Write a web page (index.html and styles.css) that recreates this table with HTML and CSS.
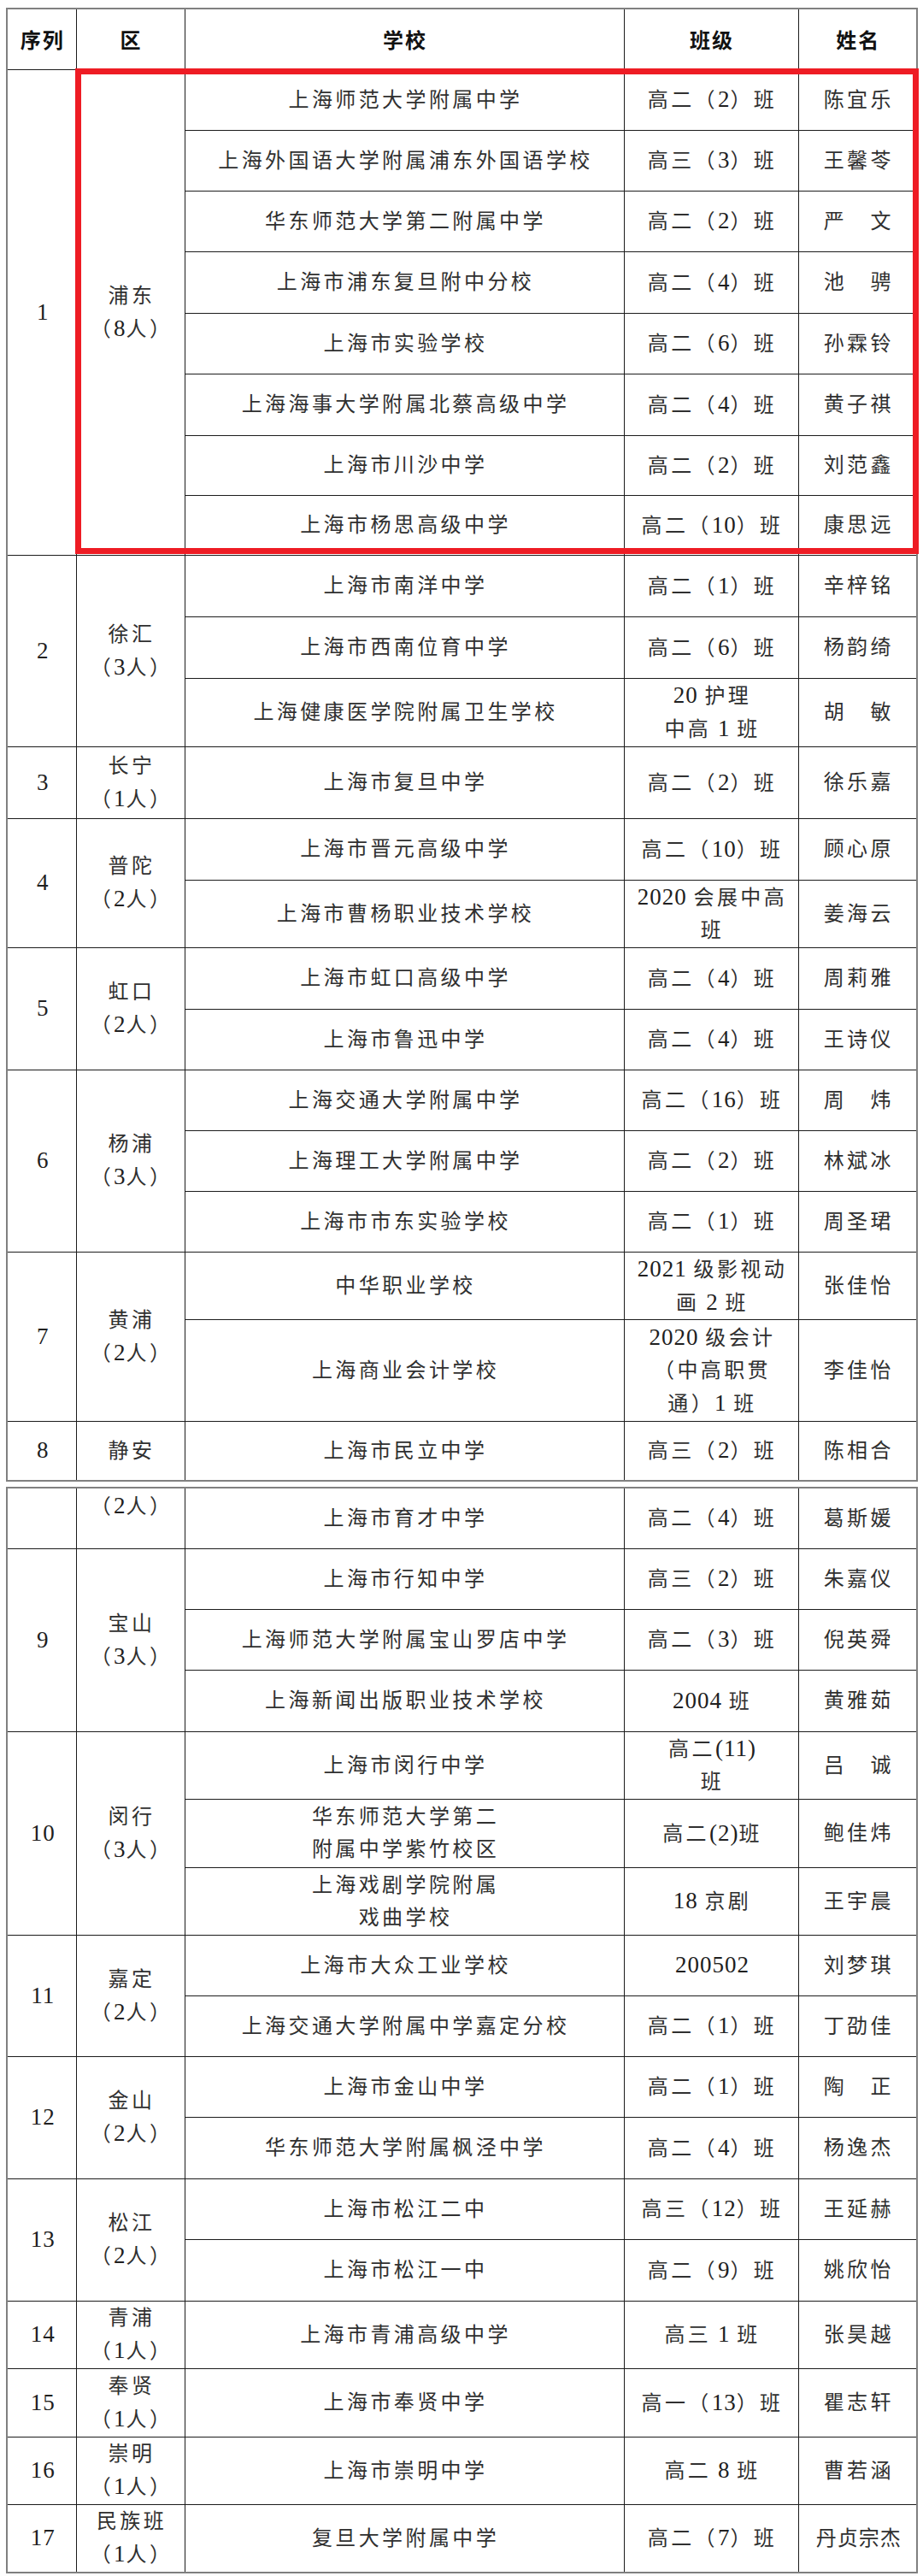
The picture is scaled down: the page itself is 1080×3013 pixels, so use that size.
FILE: index.html
```html
<!DOCTYPE html>
<html lang="zh-CN">
<head>
<meta charset="utf-8">
<title>名单</title>
<link rel="stylesheet" href="styles.css">
</head>
<body>
<div class="page">
  <div class="sheet">
    <table class="roster">
      <colgroup><col class="c-no"><col class="c-dist"><col class="c-school"><col class="c-class"><col class="c-name"></colgroup>
      <thead>
        <tr class="h71 head"><th>序列</th><th>区</th><th>学校</th><th>班级</th><th>姓名</th></tr>
      </thead>
      <tbody>
        <tr class="h71"><td rowspan="8"><span class="n">1</span></td><td rowspan="8">浦东<br>（<span class="n">8</span>人）</td><td>上海师范大学附属中学</td><td>高二（<span class="n">2</span>）班</td><td>陈宜乐</td></tr>
        <tr class="h71"><td>上海外国语大学附属浦东外国语学校</td><td>高三（<span class="n">3</span>）班</td><td>王馨苓</td></tr>
        <tr class="h71"><td>华东师范大学第二附属中学</td><td>高二（<span class="n">2</span>）班</td><td>严　文</td></tr>
        <tr class="h72"><td>上海市浦东复旦附中分校</td><td>高二（<span class="n">4</span>）班</td><td>池　骋</td></tr>
        <tr class="h71"><td>上海市实验学校</td><td>高二（<span class="n">6</span>）班</td><td>孙霖铃</td></tr>
        <tr class="h72"><td>上海海事大学附属北蔡高级中学</td><td>高二（<span class="n">4</span>）班</td><td>黄子祺</td></tr>
        <tr class="h70"><td>上海市川沙中学</td><td>高二（<span class="n">2</span>）班</td><td>刘范鑫</td></tr>
        <tr class="h70"><td>上海市杨思高级中学</td><td>高二（<span class="n">10</span>）班</td><td>康思远</td></tr>

        <tr class="h72"><td rowspan="3"><span class="n">2</span></td><td rowspan="3">徐汇<br>（<span class="n">3</span>人）</td><td>上海市南洋中学</td><td>高二（<span class="n">1</span>）班</td><td>辛梓铭</td></tr>
        <tr class="h72"><td>上海市西南位育中学</td><td>高二（<span class="n">6</span>）班</td><td>杨韵绮</td></tr>
        <tr class="h80"><td>上海健康医学院附属卫生学校</td><td><span class="n">20 </span>护理<br>中高<span class="n"> 1 </span>班</td><td>胡　敏</td></tr>

        <tr class="h84"><td><span class="n">3</span></td><td>长宁<br>（<span class="n">1</span>人）</td><td>上海市复旦中学</td><td>高二（<span class="n">2</span>）班</td><td>徐乐嘉</td></tr>

        <tr class="h72"><td rowspan="2"><span class="n">4</span></td><td rowspan="2">普陀<br>（<span class="n">2</span>人）</td><td>上海市晋元高级中学</td><td>高二（<span class="n">10</span>）班</td><td>顾心原</td></tr>
        <tr class="h79"><td>上海市曹杨职业技术学校</td><td><span class="n">2020 </span>会展中高<br>班</td><td>姜海云</td></tr>

        <tr class="h72"><td rowspan="2"><span class="n">5</span></td><td rowspan="2">虹口<br>（<span class="n">2</span>人）</td><td>上海市虹口高级中学</td><td>高二（<span class="n">4</span>）班</td><td>周莉雅</td></tr>
        <tr class="h71"><td>上海市鲁迅中学</td><td>高二（<span class="n">4</span>）班</td><td>王诗仪</td></tr>

        <tr class="h71"><td rowspan="3"><span class="n">6</span></td><td rowspan="3">杨浦<br>（<span class="n">3</span>人）</td><td>上海交通大学附属中学</td><td>高二（<span class="n">16</span>）班</td><td>周　炜</td></tr>
        <tr class="h71"><td>上海理工大学附属中学</td><td>高二（<span class="n">2</span>）班</td><td>林斌冰</td></tr>
        <tr class="h71"><td>上海市市东实验学校</td><td>高二（<span class="n">1</span>）班</td><td>周圣珺</td></tr>

        <tr class="h79"><td rowspan="2"><span class="n">7</span></td><td rowspan="2">黄浦<br>（<span class="n">2</span>人）</td><td>中华职业学校</td><td><span class="n">2021 </span>级影视动<br>画<span class="n"> 2 </span>班</td><td>张佳怡</td></tr>
        <tr class="h119"><td>上海商业会计学校</td><td><span class="n">2020 </span>级会计<br>（中高职贯<br>通）<span class="n">1 </span>班</td><td>李佳怡</td></tr>

        <tr class="h70"><td><span class="n">8</span></td><td>静安</td><td>上海市民立中学</td><td>高三（<span class="n">2</span>）班</td><td>陈相合</td></tr>
      </tbody>
    </table>
    <div class="highlight"></div>
  </div>

  <table class="roster second">
    <colgroup><col class="c-no"><col class="c-dist"><col class="c-school"><col class="c-class"><col class="c-name"></colgroup>
    <tbody>
      <tr class="h71"><td></td><td class="top">（<span class="n">2</span>人）</td><td>上海市育才中学</td><td>高二（<span class="n">4</span>）班</td><td>葛斯媛</td></tr>

      <tr class="h71"><td rowspan="3"><span class="n">9</span></td><td rowspan="3">宝山<br>（<span class="n">3</span>人）</td><td>上海市行知中学</td><td>高三（<span class="n">2</span>）班</td><td>朱嘉仪</td></tr>
      <tr class="h71"><td>上海师范大学附属宝山罗店中学</td><td>高二（<span class="n">3</span>）班</td><td>倪英舜</td></tr>
      <tr class="h72"><td>上海新闻出版职业技术学校</td><td><span class="n">2004 </span>班</td><td>黄雅茹</td></tr>

      <tr class="h79"><td rowspan="3"><span class="n">10</span></td><td rowspan="3">闵行<br>（<span class="n">3</span>人）</td><td>上海市闵行中学</td><td>高二<span class="n">(11)</span><br>班</td><td>吕　诚</td></tr>
      <tr class="h80"><td>华东师范大学第二<br>附属中学紫竹校区</td><td>高二<span class="n">(2)</span>班</td><td>鲍佳炜</td></tr>
      <tr class="h79"><td>上海戏剧学院附属<br>戏曲学校</td><td><span class="n">18 </span>京剧</td><td>王宇晨</td></tr>

      <tr class="h71"><td rowspan="2"><span class="n">11</span></td><td rowspan="2">嘉定<br>（<span class="n">2</span>人）</td><td>上海市大众工业学校</td><td><span class="n">200502</span></td><td>刘梦琪</td></tr>
      <tr class="h71"><td>上海交通大学附属中学嘉定分校</td><td>高二（<span class="n">1</span>）班</td><td>丁劭佳</td></tr>

      <tr class="h71"><td rowspan="2"><span class="n">12</span></td><td rowspan="2">金山<br>（<span class="n">2</span>人）</td><td>上海市金山中学</td><td>高二（<span class="n">1</span>）班</td><td>陶　正</td></tr>
      <tr class="h72"><td>华东师范大学附属枫泾中学</td><td>高二（<span class="n">4</span>）班</td><td>杨逸杰</td></tr>

      <tr class="h71"><td rowspan="2"><span class="n">13</span></td><td rowspan="2">松江<br>（<span class="n">2</span>人）</td><td>上海市松江二中</td><td>高三（<span class="n">12</span>）班</td><td>王延赫</td></tr>
      <tr class="h72"><td>上海市松江一中</td><td>高二（<span class="n">9</span>）班</td><td>姚欣怡</td></tr>

      <tr class="h79"><td><span class="n">14</span></td><td>青浦<br>（<span class="n">1</span>人）</td><td>上海市青浦高级中学</td><td>高三<span class="n"> 1 </span>班</td><td>张昊越</td></tr>
      <tr class="h80"><td><span class="n">15</span></td><td>奉贤<br>（<span class="n">1</span>人）</td><td>上海市奉贤中学</td><td>高一（<span class="n">13</span>）班</td><td>瞿志轩</td></tr>
      <tr class="h79"><td><span class="n">16</span></td><td>崇明<br>（<span class="n">1</span>人）</td><td>上海市崇明中学</td><td>高二<span class="n"> 8 </span>班</td><td>曹若涵</td></tr>
      <tr class="h80"><td><span class="n">17</span></td><td>民族班<br>（<span class="n">1</span>人）</td><td>复旦大学附属中学</td><td>高二（<span class="n">7</span>）班</td><td class="tight">丹贞宗杰</td></tr>
    </tbody>
  </table>
</div>
</body>
</html>
```

FILE: styles.css
```css
html, body {
  margin: 0;
  padding: 0;
  background: #ffffff;
}

.page {
  padding: 9px 0 0 7px;
  width: 1065px;
}

.sheet {
  position: relative;
}

.roster {
  width: 1065px;
  table-layout: fixed;
  border-collapse: collapse;
  border: 2px solid #808080;
  font-family: "Liberation Serif", "Noto Sans CJK SC", serif;
  color: #303030;
}

.roster.second {
  margin-top: 6px;
}

.c-no { width: 81px; }
.c-dist { width: 127px; }
.c-school { width: 514px; }
.c-class { width: 204px; }
.c-name { width: 139px; }

.roster th,
.roster td {
  border: 1px solid #1c1c1c;
  padding: 0 0 0 3px;
  text-align: center;
  vertical-align: middle;
  font-size: 24px;
  line-height: 38px;
  letter-spacing: 3.4px;
  font-weight: normal;
  white-space: nowrap;
}

.roster th {
  font-family: "Noto Sans CJK SC", sans-serif;
  font-weight: bold;
  font-size: 24px;
  letter-spacing: 2px;
  padding-left: 2px;
  color: #111111;
}

.n {
  font-family: "Liberation Serif", serif;
  font-size: 27px;
  letter-spacing: 1px;
  color: #202020;
}

.roster td.top {
  vertical-align: top;
  padding-top: 1px;
}

.roster td.tight {
  letter-spacing: 1px;
}

.h70 { height: 70px; }
.h71 { height: 71px; }
.h72 { height: 72px; }
.h79 { height: 79px; }
.h80 { height: 80px; }
.h84 { height: 84px; }
.h119 { height: 119px; }

.highlight {
  position: absolute;
  left: 81px;
  top: 71px;
  width: 987px;
  height: 568px;
  box-sizing: border-box;
  border: 7px solid #ee1c24;
  pointer-events: none;
}
```
